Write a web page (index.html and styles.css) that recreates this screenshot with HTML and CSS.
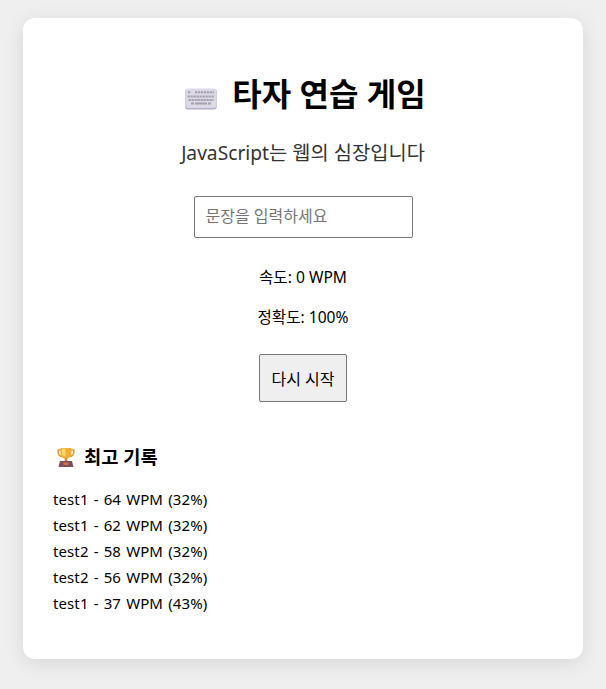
FILE: index.html
```html
<!DOCTYPE html>
<html lang="ko">
<head>
<meta charset="UTF-8">
<title>타자 연습 게임</title>
<link rel="stylesheet" href="styles.css">
</head>
<body>
<main class="container">
  <h1 class="title">
    <svg class="keyboard" viewBox="0 0 32 22" aria-hidden="true">
      <rect x="0.3" y="1" width="31.4" height="20.6" rx="2.5" fill="#b7aec8"/>
      <rect x="0.6" y="0.5" width="30.8" height="19.4" rx="2.2" fill="#ddd8e5"/>
      <g stroke="#a5a1aa" stroke-width="2" fill="none">
        <path d="M3 4.2h3M10 4.2h19" stroke-dasharray="2.3 .7"/>
        <path d="M2.5 8.5h27M3.5 12h25" stroke-dasharray="2.3 .7"/>
        <path d="M6 15.6h3M10 15.6h12M23 15.6h3"/>
      </g>
    </svg>
    <span>타자 연습 게임</span>
  </h1>
  <p class="sentence"><span class="latin">JavaScript</span>는 웹의 심장입니다</p>
  <input class="entry" type="text" placeholder="문장을 입력하세요">
  <p class="stat speed">속도: 0 WPM</p>
  <p class="stat accuracy">정확도: 100%</p>
  <button class="restart" type="button">다시 시작</button>
  <section class="records">
    <h3 class="records-title">
      <svg class="trophy" viewBox="0 0 20 20" aria-hidden="true">
        <path d="M5 3H2.200v2c0 3 2 4.500 5 4.500M15 3h2.800v2c0 3-2 4.500-5 4.500" fill="none" stroke="#e99b32" stroke-width="1.600"/>
        <path d="M4.500 1h11v4.500c0 4-2 6-5.500 6s-5.500-2-5.500-6z" fill="#f3ad35"/>
        <path d="M6 1.500h3.500v8C7 9 6 7.500 6 5z" fill="#ffd469"/>
        <path d="M9 11h2l.6 3H8.400z" fill="#df8739"/>
        <path d="M4 14h12l1.500 6h-15z" fill="#805060"/>
        <path d="M7.500 15.700h5v2.200h-5z" fill="#d4783f"/>
      </svg>
      <span>최고 기록</span>
    </h3>
    <ul class="record-list">
      <li>test1 - 64 WPM (32%)</li>
      <li>test1 - 62 WPM (32%)</li>
      <li>test2 - 58 WPM (32%)</li>
      <li>test2 - 56 WPM (32%)</li>
      <li>test1 - 37 WPM (43%)</li>
    </ul>
  </section>
</main>
</body>
</html>
```
FILE: styles.css
```css
* { box-sizing: border-box; }
body {
  margin: 0;
  height: 689px;
  overflow: hidden;
  padding-top: 18px;
  background: #efefef;
  color: #000;
  font-family: "Noto Sans", "Noto Sans CJK KR", sans-serif;
  font-size: 15px;
}
.container {
  width: 560px;
  height: 641px;
  margin: 0 auto;
  padding: 53px 30px 30px;
  background: #fff;
  border-radius: 12px;
  box-shadow: 0 4px 20px rgba(0, 0, 0, 0.1);
  display: flex;
  flex-direction: column;
  align-items: center;
}
.title {
  margin: 0;
  padding-left: 5px;
  height: 46px;
  display: flex;
  align-items: center;
  gap: 15px;
  font-size: 32px;
  line-height: 46px;
  white-space: nowrap;
}
.keyboard { width: 32px; height: 22px; margin-top: 10px; }
.sentence {
  margin: 20px 0 0;
  font-size: 19.8px;
  line-height: 32px;
  color: #333;
  white-space: nowrap;
}
.latin { font-size: 19.2px; }
.entry {
  width: 219px;
  height: 42px;
  margin-top: 27px;
  padding: 0 11px 2px;
  border: 1px solid #767676;
  border-radius: 2px;
  font: inherit;
  font-size: 16px;
}
.entry::placeholder { color: #757575; opacity: 1; }
.stat { margin: 0; font-size: 15.600px; line-height: 24px; }
.speed { margin-top: 27px; }
.accuracy { margin-top: 16px; }
.restart {
  width: 88px;
  height: 48px;
  margin-top: 25px;
  padding: 0;
  border: 1px solid #767676;
  border-radius: 2px;
  background: #efefef;
  color: #000;
  font: inherit;
  font-size: 16px;
  white-space: nowrap;
}
.records { width: 100%; margin-top: 41px; }
.records-title {
  margin: 0;
  padding-left: 3px;
  display: flex;
  align-items: center;
  gap: 8px;
  font-size: 18.720px;
  line-height: 28px;
}
.trophy { width: 20px; height: 20px; }
.record-list {
  margin: 15px 0 0;
  padding: 0;
  list-style: none;
  line-height: 26px;
  letter-spacing: 0.1px;
  word-spacing: 1.1px;
}
```
